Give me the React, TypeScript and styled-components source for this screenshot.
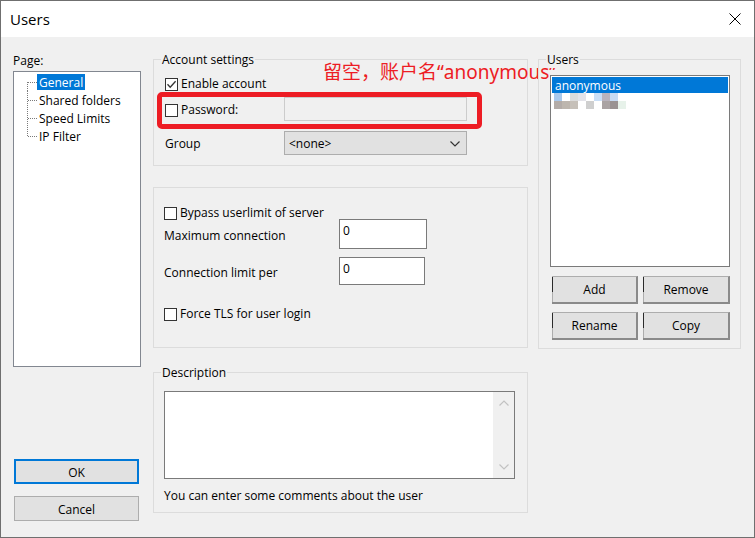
import styled, { createGlobalStyle } from "styled-components";

const GlobalStyle = createGlobalStyle`
  html, body {
    margin: 0;
    padding: 0;
    background: #f0f0f0;
  }
  body {
    font-family: "Open Sans", "Liberation Sans", sans-serif;
    font-size: 12px;
    color: #000;
  }
  * {
    box-sizing: border-box;
  }
`;

const pages = ["General", "Shared folders", "Speed Limits", "IP Filter"];

// blurred second account in the user list, drawn as 8px cells
const mosaic = [
  ["#a9c9ec", "", "#dcdcdc", "#e3e3e9", "", "#c9def6", "#b9b3bd", "#c7dbf3", ""],
  ["#b3aca8", "#bdb6ae", "#c6c0b9", "", "#cfcfcf", "", "#aaa3a3", "#9a9393", "#e7f2ea"],
];

function CheckBox({ checked }: { checked?: boolean }) {
  return (
    <Box>
      {checked && (
        <svg width="11" height="11" viewBox="0 0 11 11">
          <path d="M1.5 5.3 L4.2 8.2 L9.6 2.2" fill="none" stroke="#333" strokeWidth="1.3" />
        </svg>
      )}
    </Box>
  );
}

function TreeConnector({ first, last }: { first: boolean; last: boolean }) {
  return (
    <svg width="17" height="18" viewBox="0 0 17 18">
      <line
        x1="7.5"
        y1={first ? 9 : 0}
        x2="7.5"
        y2={last ? 10 : 18}
        stroke="#7a7a7a"
        strokeDasharray="1 1"
      />
      <line x1="8" y1="9.5" x2="17" y2="9.5" stroke="#7a7a7a" strokeDasharray="1 1" />
    </svg>
  );
}

function Chevron({ up, color }: { up?: boolean; color: string }) {
  return (
    <svg width="10" height="6" viewBox="0 0 10 6">
      <path
        d={up ? "M0.5 5.5 L5 1 L9.5 5.5" : "M0.5 0.5 L5 5 L9.5 0.5"}
        fill="none"
        stroke={color}
        strokeWidth="1.2"
      />
    </svg>
  );
}

function App() {
  return (
    <>
      <GlobalStyle />
      <Window>
        <TitleBar>
          <TitleText>Users</TitleText>
          <svg width="12" height="12" viewBox="0 0 12 12">
            <path d="M0.5 0.5 L11.5 11.5 M11.5 0.5 L0.5 11.5" stroke="#000" strokeWidth="1" />
          </svg>
        </TitleBar>

        <Body>
          <SideColumn>
            <FieldLabel>Page:</FieldLabel>
            <PageTree>
              {pages.map((page, i) => (
                <TreeRow key={page}>
                  <TreeConnector first={i === 0} last={i === pages.length - 1} />
                  <TreeText $selected={i === 0}>{page}</TreeText>
                </TreeRow>
              ))}
            </PageTree>
            <DialogButtons>
              <DialogButton $default>OK</DialogButton>
              <DialogButton>Cancel</DialogButton>
            </DialogButtons>
          </SideColumn>

          <MainColumn>
            <GroupBox $h={107}>
              <GroupTitle>Account settings</GroupTitle>
              <Annotation>留空，账户名“anonymous”</Annotation>
              <Highlight />
              <GroupRows $pl={11}>
                <FormRow $mt={8} $h={16}>
                  <CheckLabel $dy={1}>
                    <CheckBox checked />
                    Enable account
                  </CheckLabel>
                </FormRow>
                <FormRow $mt={6} $h={24}>
                  <CheckLabel $w={119} $dy={1}>
                    <CheckBox />
                    Password:
                  </CheckLabel>
                  <TextField $w={183} $h={24} $disabled />
                </FormRow>
                <FormRow $mt={10} $h={24}>
                  <RowLabel $w={119} $dy={1}>Group</RowLabel>
                  <ComboBox>
                    &lt;none&gt;
                    <Chevron color="#333" />
                  </ComboBox>
                </FormRow>
              </GroupRows>
            </GroupBox>

            <GroupBox $h={161} $mt={21}>
              <GroupRows $pl={10}>
                <FormRow $mt={17} $h={14}>
                  <CheckLabel $dy={1}>
                    <CheckBox />
                    Bypass userlimit of server
                  </CheckLabel>
                </FormRow>
                <FormRow $mt={0} $h={30}>
                  <RowLabel $w={175} $dy={2}>Maximum connection</RowLabel>
                  <TextField $w={88} $h={30}>0</TextField>
                </FormRow>
                <FormRow $mt={8} $h={28}>
                  <RowLabel $w={175} $dy={2}>Connection limit per</RowLabel>
                  <TextField $w={86} $h={28}>0</TextField>
                </FormRow>
                <FormRow $mt={20} $h={16}>
                  <CheckLabel $dy={1}>
                    <CheckBox />
                    Force TLS for user login
                  </CheckLabel>
                </FormRow>
              </GroupRows>
            </GroupBox>

            <GroupBox $h={141} $mt={24}>
              <GroupTitle>Description</GroupTitle>
              <GroupRows $pl={10}>
                <MemoBox>
                  <ScrollTrack>
                    <Chevron up color="#c2c2c2" />
                    <Chevron color="#c2c2c2" />
                  </ScrollTrack>
                </MemoBox>
                <HintText>You can enter some comments about the user</HintText>
              </GroupRows>
            </GroupBox>
          </MainColumn>

          <UsersColumn>
            <GroupBox $h={290}>
              <GroupTitle>Users</GroupTitle>
              <UserList>
                <UserItem $selected>anonymous</UserItem>
                <svg width="72" height="16" viewBox="0 0 72 16" style={{ marginLeft: 2 }}>
                  {mosaic.map((row, r) =>
                    row.map((c, col) =>
                      c ? <rect key={`${r}-${col}`} x={col * 8} y={r * 8} width="8" height="8" fill={c} /> : null
                    )
                  )}
                </svg>
              </UserList>
              <UserButtons>
                <UserButton>Add</UserButton>
                <UserButton>Remove</UserButton>
                <UserButton>Rename</UserButton>
                <UserButton>Copy</UserButton>
              </UserButtons>
            </GroupBox>
          </UsersColumn>
        </Body>
      </Window>
    </>
  );
}

const Window = styled.div`
  width: 755px;
  height: 538px;
  border: 1px solid #6f6f6f;
  background: #f0f0f0;
  display: flex;
  flex-direction: column;
`;

const TitleBar = styled.div`
  height: 36px;
  flex-shrink: 0;
  background: #fff;
  display: flex;
  align-items: center;
  justify-content: space-between;
  padding: 0 13px 0 9px;
`;

const TitleText = styled.span`
  font-size: 15px;
  line-height: 20px;
`;

const Body = styled.div`
  flex: 1;
  display: flex;
  padding: 14px 12px 0 12px;
`;

const SideColumn = styled.div`
  width: 128px;
  margin-right: 12px;
  display: flex;
  flex-direction: column;
`;

const FieldLabel = styled.div`
  line-height: 16px;
  margin-top: 2px;
`;

const PageTree = styled.div`
  margin-top: 2px;
  height: 296px;
  border: 1px solid #828790;
  background: #fff;
  padding: 1px 0 0 6px;
`;

const TreeRow = styled.div`
  height: 18px;
  display: flex;
  align-items: center;
`;

const TreeText = styled.span<{ $selected?: boolean }>`
  line-height: 16px;
  padding: 1px 2px 0;
  height: 16px;
  background: ${(p) => (p.$selected ? "#0078d7" : "transparent")};
  color: ${(p) => (p.$selected ? "#fff" : "#000")};
`;

const DialogButtons = styled.div`
  margin: 92px 2px 0 1px;
  display: flex;
  flex-direction: column;
  gap: 12px;
`;

const DialogButton = styled.div<{ $default?: boolean }>`
  height: 25px;
  display: flex;
  align-items: center;
  justify-content: center;
  padding-top: 1px;
  background: #e1e1e1;
  border: ${(p) => (p.$default ? "2px solid #0078d7" : "1px solid #adadad")};
`;

const MainColumn = styled.div`
  width: 375px;
  margin-right: 10px;
  padding-top: 8px;
  display: flex;
  flex-direction: column;
`;

const UsersColumn = styled.div`
  width: 203px;
  padding-top: 8px;
`;

const GroupBox = styled.div<{ $h: number; $mt?: number }>`
  position: relative;
  height: ${(p) => p.$h}px;
  margin-top: ${(p) => p.$mt ?? 0}px;
  border: 1px solid #dcdcdc;
  display: flex;
  flex-direction: column;
`;

const GroupTitle = styled.div`
  align-self: flex-start;
  margin: -9px 0 -1px 7px;
  padding: 1px 1px 0;
  line-height: 16px;
  background: #f0f0f0;
`;

const GroupRows = styled.div<{ $pl: number }>`
  display: flex;
  flex-direction: column;
  padding-left: ${(p) => p.$pl}px;
`;

const FormRow = styled.div<{ $mt: number; $h: number }>`
  margin-top: ${(p) => p.$mt}px;
  height: ${(p) => p.$h}px;
  display: flex;
  align-items: center;
`;

const CheckLabel = styled.div<{ $w?: number; $dy?: number }>`
  display: flex;
  align-items: center;
  gap: 3px;
  line-height: 16px;
  padding-top: ${(p) => (p.$dy ?? 0) * 2}px;
  width: ${(p) => (p.$w ? `${p.$w}px` : "auto")};
`;

const RowLabel = styled.div<{ $w: number; $dy?: number }>`
  width: ${(p) => p.$w}px;
  line-height: 16px;
  padding-top: ${(p) => (p.$dy ?? 0) * 2}px;
`;

const Box = styled.span`
  width: 13px;
  height: 13px;
  flex-shrink: 0;
  border: 1px solid #333;
  background: #fff;
  display: flex;
  align-items: center;
  justify-content: center;
`;

const TextField = styled.div<{ $w: number; $h: number; $disabled?: boolean }>`
  width: ${(p) => p.$w}px;
  height: ${(p) => p.$h}px;
  align-self: flex-start;
  padding: 3px 4px 0 3px;
  line-height: 16px;
  background: ${(p) => (p.$disabled ? "#f0f0f0" : "#fff")};
  border: 1px solid ${(p) => (p.$disabled ? "#cccccc" : "#7a7a7a")};
`;

const ComboBox = styled.div`
  width: 183px;
  height: 24px;
  padding: 1px 6px 0 4px;
  display: flex;
  align-items: center;
  justify-content: space-between;
  background: #e1e1e1;
  border: 1px solid #adadad;
  line-height: 16px;
`;

const Annotation = styled.div`
  position: absolute;
  left: 169px;
  top: 0;
  white-space: nowrap;
  font-family: "Noto Sans", "Noto Sans CJK SC", sans-serif;
  font-size: 19px;
  line-height: 24px;
  color: #ed1c24;
`;

const Highlight = styled.div`
  position: absolute;
  left: 3px;
  top: 32px;
  width: 325px;
  height: 37px;
  border: 5px solid #ed1c24;
  border-radius: 5px;
`;

const MemoBox = styled.div`
  margin-top: 11px;
  width: 351px;
  height: 88px;
  border: 1px solid #7a7a7a;
  background: #fff;
  display: flex;
  justify-content: flex-end;
`;

const ScrollTrack = styled.div`
  width: 21px;
  background: #f0f0f0;
  display: flex;
  flex-direction: column;
  align-items: center;
  justify-content: space-between;
  padding: 8px 0 8px;
`;

const HintText = styled.div`
  margin-top: 9px;
  line-height: 16px;
`;

const UserList = styled.div`
  margin: 8px 0 0 11px;
  width: 180px;
  height: 192px;
  border: 1px solid #7a7a7a;
  background: #fff;
  padding: 1px;
  display: flex;
  flex-direction: column;
  align-items: flex-start;
`;

const UserItem = styled.div<{ $selected?: boolean }>`
  align-self: stretch;
  height: 16px;
  line-height: 16px;
  padding: 1px 0 0 3px;
  background: ${(p) => (p.$selected ? "#0078d7" : "transparent")};
  color: ${(p) => (p.$selected ? "#fff" : "#000")};
`;

const UserButtons = styled.div`
  margin: 9px 0 0 13px;
  display: grid;
  grid-template-columns: 86px 87px;
  grid-auto-rows: 28px;
  column-gap: 5px;
  row-gap: 8px;
`;

const UserButton = styled.div`
  display: flex;
  align-items: center;
  justify-content: center;
  border: 1px solid #adadad;
  border-left-width: 0;
  border-right: 2px solid #8a8a8a;
  border-bottom: 2px solid #8a8a8a;
  padding-left: 1px;
  background:
    linear-gradient(#2b2b2b 0 15px, #adadad 15px) 0 0 / 1px 100% no-repeat,
    #e1e1e1;
`;

export default App;
